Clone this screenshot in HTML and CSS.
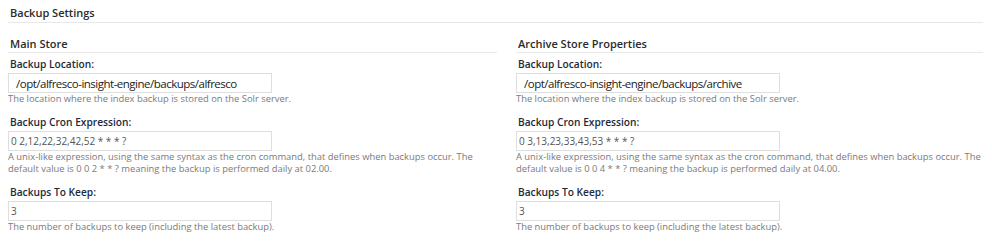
FILE: index.html
```html
<!DOCTYPE html>
<html lang="en">
<head>
    <meta charset="utf-8" />
    <title>Backup Settings</title>
    <link rel="stylesheet" href="styles.css">
</head>
<body>
    <div id="backupSettings">
        <h2 class="section-title">Backup Settings</h2>

        <div class="stores">
            <div class="store">
                <h3 class="store-title">Main Store</h3>

                <div class="field">
                    <label class="field-label">Backup Location:</label>
                    <input class="field-input location" type="text" value="/opt/alfresco-insight-engine/backups/alfresco" />
                    <p class="help">The location where the index backup is stored on the Solr server.</p>
                </div>

                <div class="field">
                    <label class="field-label">Backup Cron Expression:</label>
                    <input class="field-input" type="text" value="0 2,12,22,32,42,52 * * * ?" />
                    <p class="help">A unix-like expression, using the same syntax as the cron command, that defines when backups occur. The default value is 0 0 2 * * ? meaning the backup is performed daily at 02.00.</p>
                </div>

                <div class="field">
                    <label class="field-label">Backups To Keep:</label>
                    <input class="field-input" type="text" value="3" />
                    <p class="help">The number of backups to keep (including the latest backup).</p>
                </div>
            </div>

            <div class="store">
                <h3 class="store-title">Archive Store Properties</h3>

                <div class="field">
                    <label class="field-label">Backup Location:</label>
                    <input class="field-input location" type="text" value="/opt/alfresco-insight-engine/backups/archive" />
                    <p class="help">The location where the index backup is stored on the Solr server.</p>
                </div>

                <div class="field">
                    <label class="field-label">Backup Cron Expression:</label>
                    <input class="field-input" type="text" value="0 3,13,23,33,43,53 * * * ?" />
                    <p class="help">A unix-like expression, using the same syntax as the cron command, that defines when backups occur. The default value is 0 0 4 * * ? meaning the backup is performed daily at 04.00.</p>
                </div>

                <div class="field">
                    <label class="field-label">Backups To Keep:</label>
                    <input class="field-input" type="text" value="3" />
                    <p class="help">The number of backups to keep (including the latest backup).</p>
                </div>
            </div>
        </div>
    </div>
</body>
</html>
```

FILE: styles.css
```css
body {
    margin: 0;
    padding: 0 8px;
    background: #fff;
    font-family: "Open Sans", "Noto Sans", sans-serif;
    color: #333;
}

#backupSettings {
    width: 975px;
}

.section-title {
    margin: 6px 0 0;
    padding: 0 2px 2px;
    font-size: 11px;
    line-height: 14px;
    font-weight: 600;
    color: #2b2b2b;
    border-bottom: 1px solid #e8e8e8;
}

.stores {
    display: grid;
    grid-template-columns: 489px 467px;
    column-gap: 19px;
    margin-top: 14px;
}

.store-title {
    margin: 0;
    padding: 0 2px 1px;
    font-size: 11px;
    line-height: 14px;
    font-weight: 600;
    color: #2b2b2b;
    border-bottom: 1px solid #e8e8e8;
}

.field {
    margin-top: 10px;
}

.store-title + .field {
    margin-top: 4px;
}

.field-label {
    display: block;
    padding-left: 2px;
    font-size: 10.2px;
    line-height: 14px;
    font-weight: 600;
    color: #1d2a3a;
}

.field-input {
    display: block;
    box-sizing: border-box;
    width: 264px;
    height: 20px;
    margin: 2px 0 0;
    padding: 0 2px;
    border: 1px solid #dedede;
    border-radius: 0;
    outline: none;
    font-family: "Open Sans", "Noto Sans", sans-serif;
    font-size: 10px;
    color: #555;
    background: #fff;
}

.field-input.location {
    padding-left: 7px;
    font-size: 11.5px;
    letter-spacing: -0.5px;
    color: #222;
}

.help {
    max-width: 467px;
    margin: 0;
    font-size: 9.4px;
    line-height: 12px;
    color: #7a7a7a;
}
```
